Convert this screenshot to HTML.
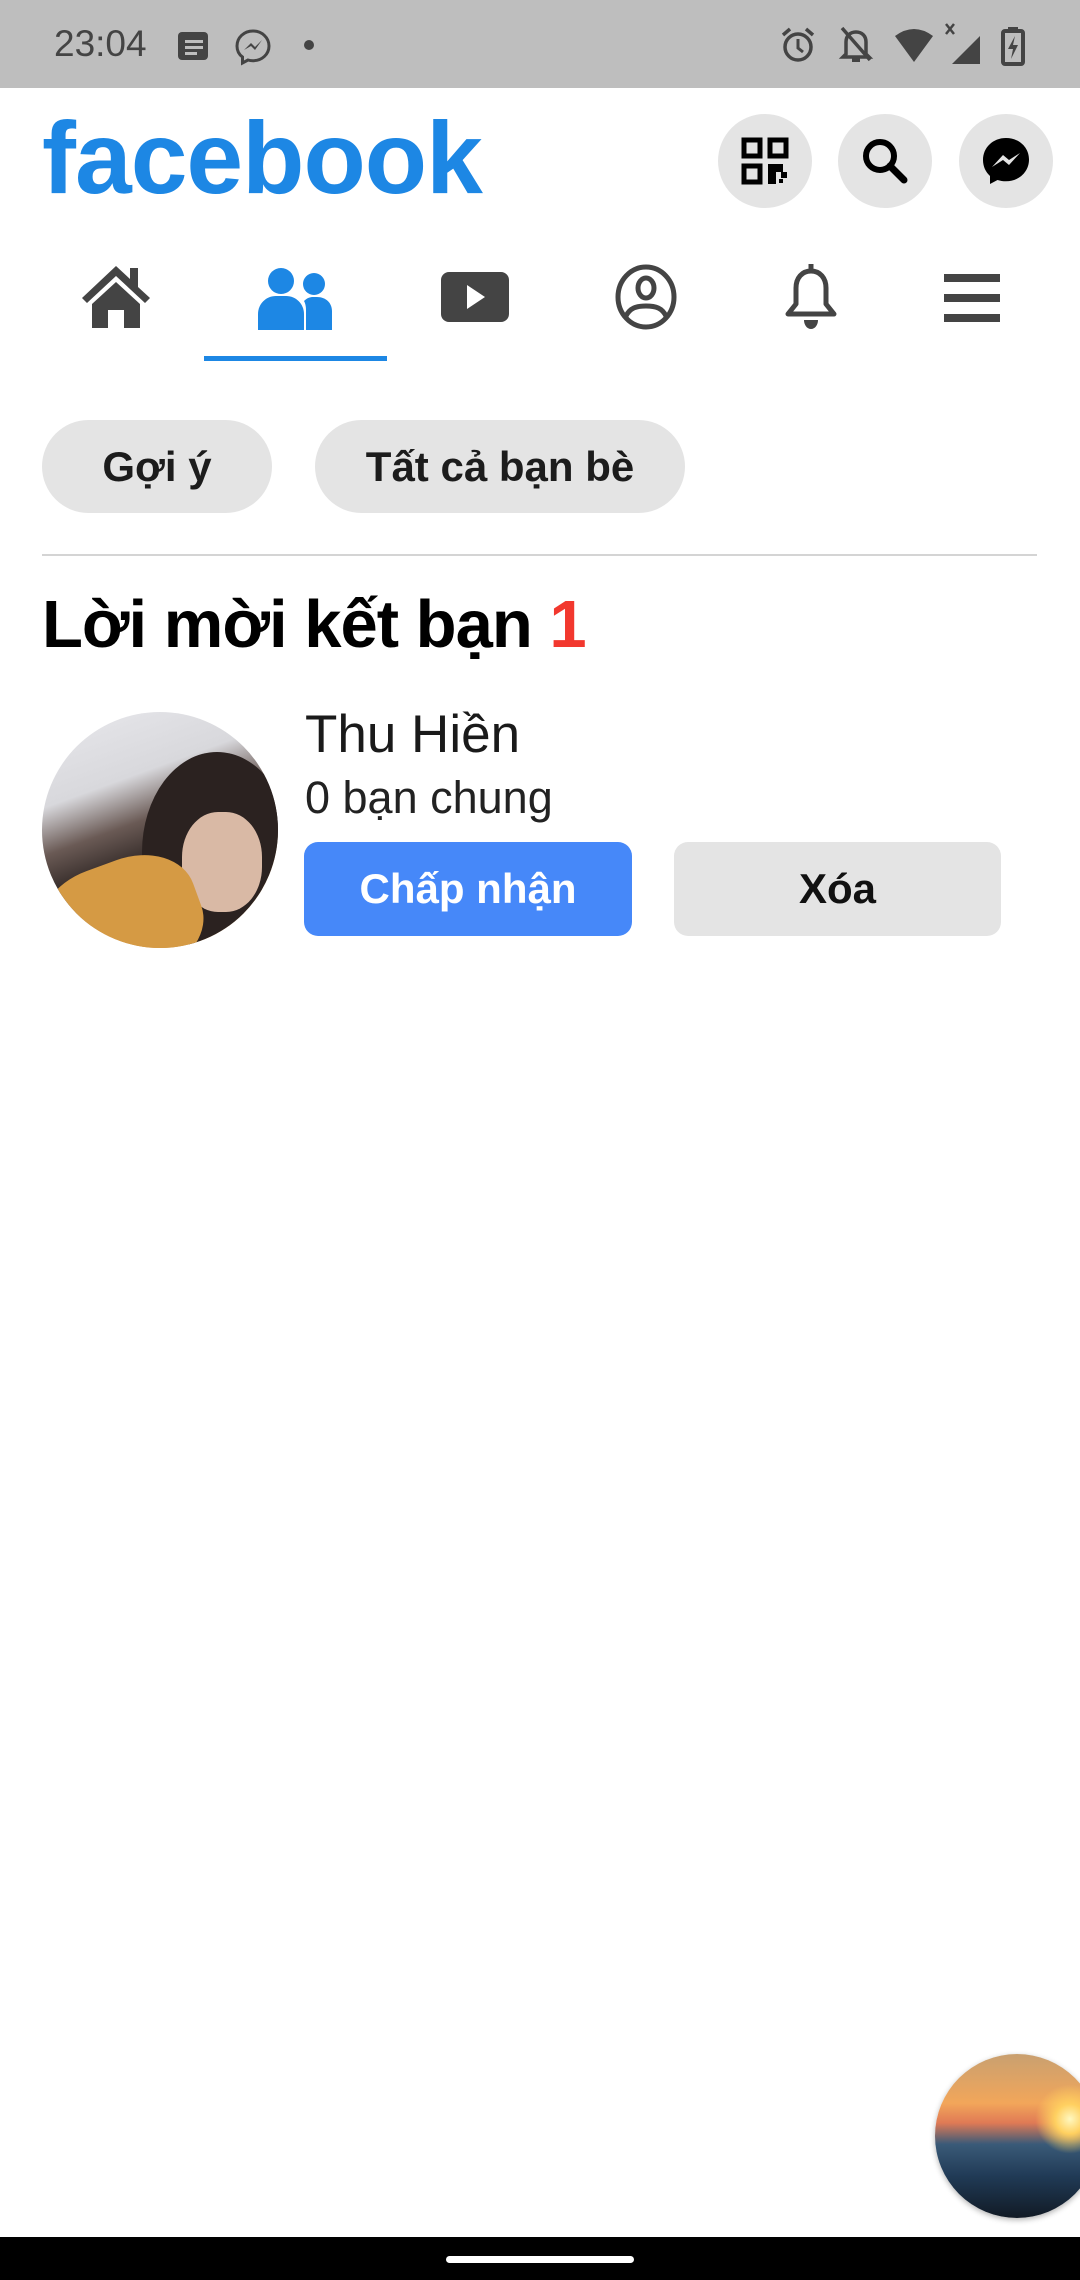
<!DOCTYPE html>
<html><head><meta charset="utf-8"><style>
*{margin:0;padding:0;box-sizing:border-box}
body{width:1080px;height:2280px;background:#fff;position:relative;overflow:hidden;font-family:"Liberation Sans",sans-serif;color:#111}
.abs{position:absolute}
.sb{left:0;top:0;width:1080px;height:88px;background:#bebebe}
.circ{width:94px;height:94px;border-radius:50%;background:#e4e4e4;top:114px}
.chip{top:420px;height:93px;border-radius:47px;background:#e4e4e4;font-size:42px;font-weight:bold;color:#1c1c1c;display:flex;align-items:center;justify-content:center}
.btn{top:842px;height:94px;border-radius:14px;font-size:42px;font-weight:bold;display:flex;align-items:center;justify-content:center}
</style></head><body>
<div class="abs sb"></div>
<div class="abs" style="left:54px;top:23px;font-size:37px;color:#444">23:04</div>
<svg class="abs" style="left:176px;top:30px" width="36" height="32" viewBox="0 0 36 32"><rect x="2" y="2" width="30" height="28" rx="4" fill="#444"/><rect x="9" y="10" width="18" height="3" fill="#bebebe"/><rect x="9" y="16" width="18" height="3" fill="#bebebe"/><rect x="9" y="22" width="12" height="3" fill="#bebebe"/></svg>
<svg class="abs" style="left:234px;top:28px" width="38" height="38" viewBox="0 0 38 38"><path d="M19 3C10 3 3 9.5 3 18c0 4.5 2 8.5 5.5 11v6l5.5-3c1.600.5 3.200.7 5 .7 9 0 16-6.500 16-14.700S28 3 19 3z" fill="none" stroke="#444" stroke-width="3"/><path d="M10 22l7-7 4 4 7-7-7 10-4-4z" fill="#444"/></svg>
<div class="abs" style="left:304px;top:40px;width:10px;height:10px;border-radius:50%;background:#444"></div>
<svg class="abs" style="left:780px;top:26px" width="36" height="38" viewBox="0 0 36 38"><circle cx="18" cy="21" r="13" fill="none" stroke="#444" stroke-width="3.5"/><path d="M18 13v9l5 4" fill="none" stroke="#444" stroke-width="3"/><path d="M3 9l7-6M33 9l-7-6" stroke="#444" stroke-width="3.5"/></svg>
<svg class="abs" style="left:838px;top:24px" width="36" height="40" viewBox="0 0 36 40"><path d="M8 30V18c0-6 4-10 10-10s10 4 10 10v12l3 3H5z" fill="none" stroke="#444" stroke-width="3.5"/><path d="M14 36h8" stroke="#444" stroke-width="4"/><path d="M4 4l28 32" stroke="#444" stroke-width="3.5"/></svg>
<svg class="abs" style="left:894px;top:28px" width="40" height="34" viewBox="0 0 40 34"><path d="M1 8Q20-6 39 8L20 34z" fill="#444"/></svg>
<svg class="abs" style="left:942px;top:22px" width="40" height="42" viewBox="0 0 40 42"><path d="M38 14V42H10z" fill="#444"/><path d="M4 2l8 10M12 2l-8 10" stroke="#444" stroke-width="2.5"/></svg>
<svg class="abs" style="left:1000px;top:26px" width="26" height="40" viewBox="0 0 26 40"><rect x="8" y="1" width="10" height="5" fill="#444"/><rect x="3" y="5" width="20" height="33" rx="2" fill="none" stroke="#444" stroke-width="4"/><path d="M15 10l-7 13h5l-2 10 7-14h-5z" fill="#444"/></svg>

<div class="abs" style="left:42px;top:98px;font-size:102px;font-weight:bold;color:#1d87e4;letter-spacing:-1px;line-height:120px">facebook</div>
<div class="abs circ" style="left:718px"></div>
<div class="abs circ" style="left:838px"></div>
<div class="abs circ" style="left:959px"></div>
<svg class="abs" style="left:741px;top:137px" width="48" height="48" viewBox="0 0 48 48"><g fill="none" stroke="#000" stroke-width="5"><rect x="3" y="3" width="16" height="16"/><rect x="29" y="3" width="16" height="16"/><rect x="3" y="29" width="16" height="16"/></g><rect x="27" y="27" width="8" height="20"/><rect x="35" y="27" width="7" height="8"/><rect x="40" y="35" width="6" height="6"/><rect x="38" y="42" width="4" height="4"/></svg>
<svg class="abs" style="left:860px;top:136px" width="50" height="50" viewBox="0 0 50 50"><circle cx="20" cy="20" r="14" fill="none" stroke="#000" stroke-width="6"/><path d="M30 30l14 14" stroke="#000" stroke-width="7" stroke-linecap="round"/></svg>
<svg class="abs" style="left:981px;top:136px" width="50" height="50" viewBox="0 0 50 50"><path d="M25 2C12 2 2 11.5 2 24c0 6.5 2.7 12 7 16v8l7.5-4c2.6.8 5.5 1.3 8.5 1.3 13 0 23-9.5 23-21.8S38 2 25 2z"/><path d="M11 31l11-12 6 5 11-7-11 12-6-5z" fill="#e4e4e4"/></svg>

<svg class="abs" style="left:80px;top:262px" width="72" height="66" viewBox="0 0 72 66"><path d="M36 4L2 36l5 5 29-27 29 27 5-5-12-11V6h-8v11z" fill="#444"/><path d="M12 42L36 20l24 22v24H44V48H28v18H12z" fill="#444"/></svg>
<svg class="abs" style="left:256px;top:264px" width="80" height="66" viewBox="0 0 80 66"><circle cx="25" cy="17" r="13" fill="#1d87e4"/><circle cx="58" cy="20" r="11" fill="#1d87e4"/><path d="M2 66v-16c0-10 8-18 18-18h10c10 0 18 8 18 18v16z" fill="#1d87e4"/><path d="M50 66V46c0-6-2-9-2-9 3-3 6-4 9-4h4c9 0 15 6 15 14v19z" fill="#1d87e4"/></svg>
<div class="abs" style="left:204px;top:356px;width:183px;height:5px;background:#1d87e4"></div>
<svg class="abs" style="left:441px;top:272px" width="68" height="50" viewBox="0 0 68 50"><rect x="0" y="0" width="68" height="50" rx="8" fill="#444"/><path d="M26 13v24l18-12z" fill="#fff"/></svg>
<svg class="abs" style="left:614px;top:264px" width="64" height="66" viewBox="0 0 64 66"><ellipse cx="32" cy="33" rx="28" ry="30" fill="none" stroke="#444" stroke-width="5"/><ellipse cx="32" cy="24" rx="8" ry="10" fill="none" stroke="#444" stroke-width="5"/><path d="M12 52c4-8 10-10 20-10s16 2 20 10" fill="none" stroke="#444" stroke-width="5"/></svg>
<svg class="abs" style="left:782px;top:262px" width="58" height="70" viewBox="0 0 58 70"><path d="M29 2v6" stroke="#444" stroke-width="5"/><path d="M14 26c0-10 6-17 15-17s15 7 15 17v16l8 10H6l8-10z" fill="none" stroke="#444" stroke-width="5" stroke-linejoin="round"/><path d="M22 58h14c0 5-3 9-7 9s-7-4-7-9z" fill="#444"/></svg>
<svg class="abs" style="left:944px;top:274px" width="56" height="48" viewBox="0 0 56 48"><rect x="0" y="0" width="56" height="8" fill="#444"/><rect x="0" y="20" width="56" height="8" fill="#444"/><rect x="0" y="40" width="56" height="8" fill="#444"/></svg>

<div class="abs chip" style="left:42px;width:230px">Gợi ý</div>
<div class="abs chip" style="left:315px;width:370px">Tất cả bạn bè</div>
<div class="abs" style="left:42px;top:554px;width:995px;height:2px;background:#d4d4d4"></div>
<div class="abs" style="left:42px;top:580px;font-size:67px;font-weight:bold;color:#000;letter-spacing:-1px;line-height:90px">Lời mời kết bạn <span style="color:#f2382e">1</span></div>

<div class="abs" style="left:42px;top:712px;width:236px;height:236px;border-radius:50%;overflow:hidden;background:linear-gradient(160deg,#e8e8ec 0%,#d8d8dc 30%,#6a5a55 45%,#2a2220 60%,#c88a3e 75%,#d79a45 100%)">
<div class="abs" style="left:100px;top:40px;width:150px;height:200px;border-radius:50%;background:#2b2220"></div>
<div class="abs" style="left:140px;top:100px;width:80px;height:100px;border-radius:45%;background:#d9b9a5"></div>
<div class="abs" style="left:0;top:150px;width:160px;height:120px;border-radius:40%;background:#d59a44;transform:rotate(-20deg)"></div>
</div>
<div class="abs" style="left:305px;top:704px;font-size:53px;color:#1a1a1a">Thu Hiền</div>
<div class="abs" style="left:305px;top:772px;font-size:45px;color:#222">0 bạn chung</div>
<div class="abs btn" style="left:304px;width:328px;background:#4688f9;color:#fff">Chấp nhận</div>
<div class="abs btn" style="left:674px;width:327px;background:#e4e4e4;color:#111">Xóa</div>

<div class="abs" style="left:935px;top:2054px;width:164px;height:164px;border-radius:50%;overflow:hidden;box-shadow:0 2px 6px rgba(0,0,0,.3);background:linear-gradient(180deg,#c9a070 0%,#f2a65a 30%,#e07a55 42%,#3a5a78 55%,#203a55 75%,#111a25 100%)">
<div class="abs" style="left:100px;top:30px;width:70px;height:70px;border-radius:50%;background:radial-gradient(circle,#fff8c0 0%,#ffd060 30%,rgba(255,160,60,0) 70%)"></div>
</div>
<div class="abs" style="left:0;top:2237px;width:1080px;height:43px;background:#000"></div>
<div class="abs" style="left:446px;top:2256px;width:188px;height:7px;border-radius:4px;background:#fff"></div>
</body></html>
